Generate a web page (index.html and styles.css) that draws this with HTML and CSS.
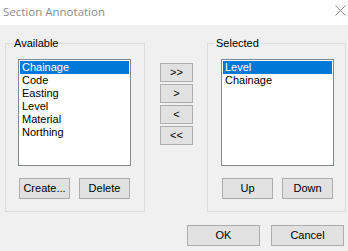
FILE: index.html
```html
<!DOCTYPE html>
<html>
<head>
<meta charset="utf-8">
<link rel="stylesheet" href="styles.css">
</head>
<body>
<div class="window">
  <div class="titlebar">
    <span class="title">Section Annotation</span>
    <svg class="close" width="11" height="11" viewBox="0 0 11 11"><path d="M0.5 0.5 L10.5 10.5 M10.5 0.5 L0.5 10.5" stroke="#8a8a8a" stroke-width="1" fill="none"/></svg>
  </div>
  <div class="main">
    <div class="group group-left">
      <span class="legend">Available</span>
      <div class="listbox">
        <div class="item selected">Chainage</div>
        <div class="item">Code</div>
        <div class="item">Easting</div>
        <div class="item">Level</div>
        <div class="item">Material</div>
        <div class="item">Northing</div>
      </div>
      <div class="btnrow">
        <button class="btn small">Create...</button>
        <button class="btn small">Delete</button>
      </div>
    </div>
    <div class="mover">
      <button class="btn arrow">&gt;&gt;</button>
      <button class="btn arrow">&gt;</button>
      <button class="btn arrow">&lt;</button>
      <button class="btn arrow">&lt;&lt;</button>
    </div>
    <div class="group group-right">
      <span class="legend">Selected</span>
      <div class="listbox">
        <div class="item selected">Level</div>
        <div class="item">Chainage</div>
      </div>
      <div class="btnrow">
        <button class="btn small">Up</button>
        <button class="btn small">Down</button>
      </div>
    </div>
  </div>
  <div class="footer">
    <button class="btn wide">OK</button>
    <button class="btn wide">Cancel</button>
  </div>
</div>
</body>
</html>
```
FILE: styles.css
```css
* { box-sizing: border-box; }
html, body { margin: 0; padding: 0; }
body {
  width: 348px;
  height: 251px;
  background: #f0f0f0;
  font-family: "Liberation Sans", Arial, sans-serif;
  font-size: 11px;
  color: #000;
  overflow: hidden;
}
.titlebar {
  height: 25px;
  background: #fff;
  display: flex;
  align-items: center;
  justify-content: space-between;
  padding: 0 2px 0 3px;
}
.title {
  font-family: "Open Sans", "Noto Sans", sans-serif;
  font-size: 11.5px;
  color: #8c8c8c;
  line-height: 14px;
  margin-top: -1px;
}
.close { display: block; margin-top: -4px; }
.main {
  display: flex;
  align-items: flex-start;
  padding: 18px 0 0 5px;
}
.group {
  position: relative;
  height: 169px;
  border: 1px solid #dcdcdc;
  padding-top: 15px;
}
.group-left { width: 140px; padding-left: 12px; }
.group-right { width: 139px; padding-left: 13px; }
.legend {
  position: absolute;
  top: -7px;
  left: 7px;
  padding: 0 1px;
  line-height: 13px;
  background: #f0f0f0;
}
.listbox {
  width: 113px;
  height: 107px;
  border: 1px solid #828790;
  background: #fff;
  padding: 1px;
}
.item {
  height: 13px;
  line-height: 13px;
  padding-left: 2px;
  white-space: nowrap;
}
.item.selected { background: #0078d7; color: #fff; }
.btnrow {
  display: flex;
  gap: 9px;
  margin: 12px 0 0 1px;
}
.btn {
  font-family: "Liberation Sans", Arial, sans-serif;
  font-size: 11px;
  color: #000;
  background: #e1e1e1;
  border: 1px solid #adadad;
  border-radius: 0;
  padding: 0;
  margin: 0;
  line-height: 13px;
}
.small { width: 51px; height: 21px; }
.mover {
  display: flex;
  flex-direction: column;
  gap: 2px;
  width: 33px;
  margin: 20px 14px 0 15px;
}
.arrow { width: 33px; height: 19px; font-size: 11px; letter-spacing: 0; }
.footer {
  display: flex;
  justify-content: flex-end;
  gap: 11px;
  padding-right: 4px;
  margin-top: 13px;
}
.wide { width: 73px; height: 21px; }
```
